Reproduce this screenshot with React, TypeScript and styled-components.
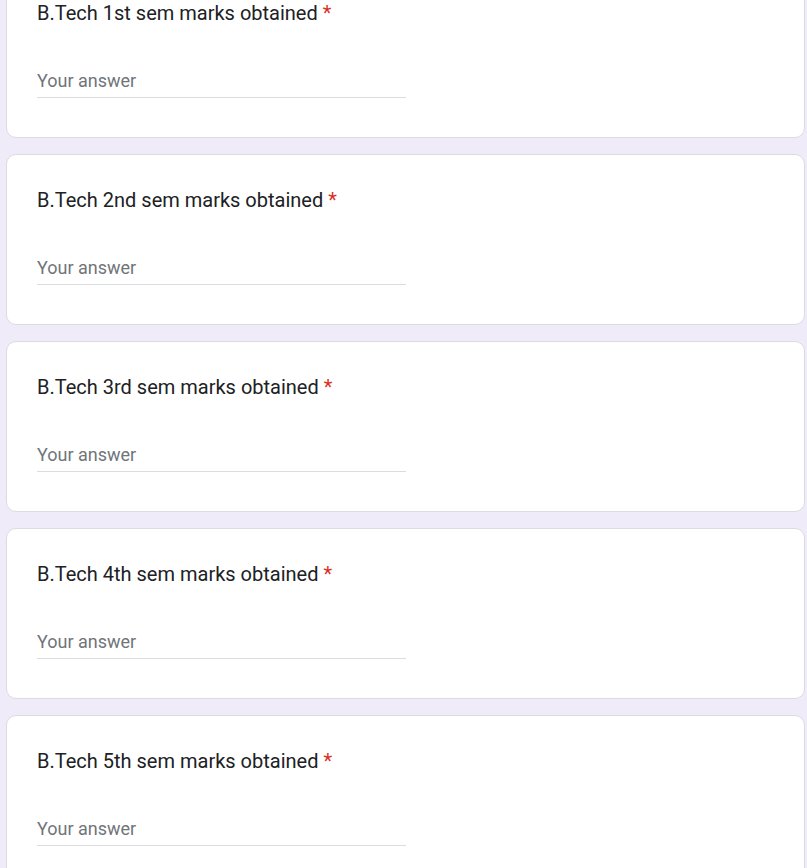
import React from "react";
import styled, { createGlobalStyle } from "styled-components";

const GlobalStyle = createGlobalStyle`
  html, body {
    margin: 0;
    padding: 0;
    background: #f0ebf8;
    font-family: Roboto, "Liberation Sans", Arial, sans-serif;
  }
  body {
    overflow: hidden;
  }
`;

const Page = styled.div`
  display: flex;
  flex-direction: column;
  gap: 16px;
  margin: -33px 2px 0 6px;
`;

const Card = styled.div`
  background: #ffffff;
  border: 1px solid #dadce0;
  border-radius: 10px;
  padding: 30px 30px 39px;
  display: flex;
  flex-direction: column;
`;

const Title = styled.div`
  font-size: 20px;
  line-height: 30px;
  letter-spacing: 0;
  color: #202124;
  font-weight: 400;
`;

const Required = styled.span`
  color: #d93025;
  margin-left: 5px;
`;

const AnswerInput = styled.input`
  display: block;
  box-sizing: border-box;
  width: 50%;
  margin: 40px 0 0;
  padding: 1px 0 5px;
  border: none;
  border-bottom: 1px solid #dadce0;
  outline: none;
  background: transparent;
  font-family: Roboto, "Liberation Sans", Arial, sans-serif;
  font-size: 18px;
  line-height: 23px;
  height: 30px;
  color: #202124;
  letter-spacing: 0;

  &::placeholder {
    color: #70757a;
    opacity: 1;
  }
`;

const questions = ["1st", "2nd", "3rd", "4th", "5th"];

export default function App() {
  return (
    <>
      <GlobalStyle />
      <Page>
        {questions.map((q) => (
          <Card key={q}>
            <Title>
              B.Tech {q} sem marks obtained<Required>*</Required>
            </Title>
            <AnswerInput type="text" placeholder="Your answer" />
          </Card>
        ))}
      </Page>
    </>
  );
}
